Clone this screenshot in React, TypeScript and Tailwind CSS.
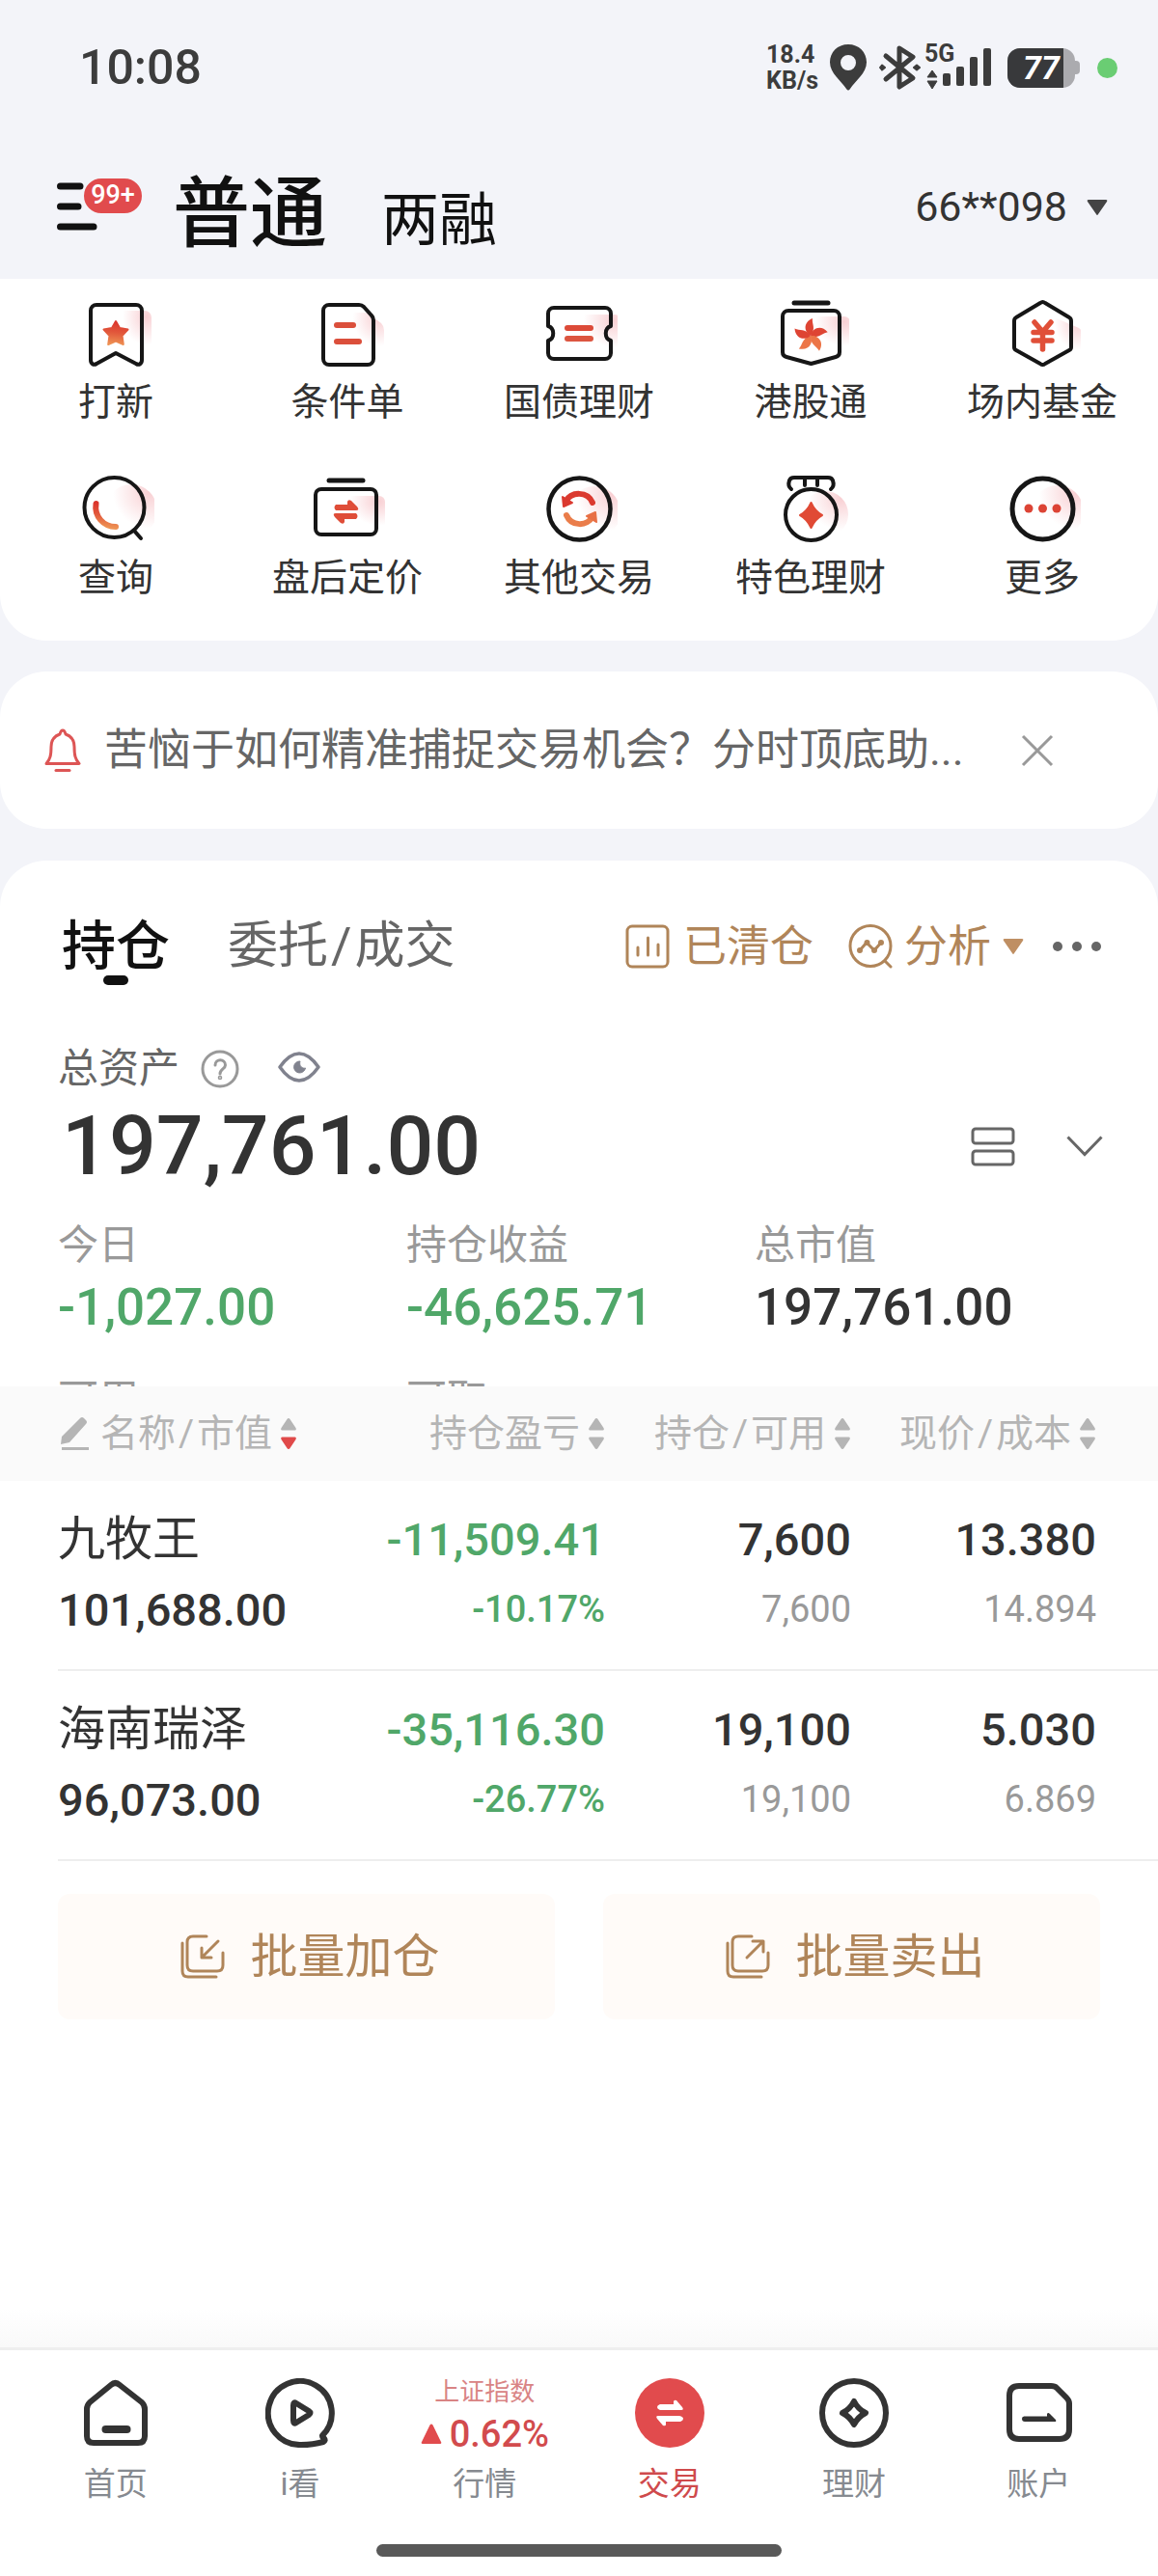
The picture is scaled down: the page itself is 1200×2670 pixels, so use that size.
import { Fragment, type ReactNode } from "react";

const INK = "#161616";

function Glow({ children }: { children: ReactNode }) {
  return (
    <svg viewBox="0 0 80 80" className="size-20" fill="none" strokeLinecap="round" strokeLinejoin="round">
      {children}
    </svg>
  );
}

// gradients shared by the shortcut icons
function Gradients() {
  return (
    <svg className="absolute size-0" aria-hidden="true">
      <defs>
        <linearGradient id="fire" x1="0.5" y1="0" x2="0.4" y2="1">
          <stop offset="0" stopColor="#db332b" />
          <stop offset="0.5" stopColor="#e2593c" />
          <stop offset="1" stopColor="#ee9253" />
        </linearGradient>
        <radialGradient id="blush" cx="0.85" cy="0.15" r="0.7">
          <stop offset="0" stopColor="#ef8e96" stopOpacity="0.42" />
          <stop offset="1" stopColor="#ef8e96" stopOpacity="0" />
        </radialGradient>
      </defs>
    </svg>
  );
}

const shortcuts: { label: string; icon: ReactNode }[] = [
  {
    label: "打新",
    icon: (
      <Glow>
        <rect x="42" y="15" width="35" height="42" rx="7" fill="url(#blush)" />
        <path d="M20 9H61a6 6 0 0 1 6 6V66c0 4-3 6-6 4L40 59 20 70c-3 2-6 0-6-4V15a6 6 0 0 1 6-6z" stroke={INK} strokeWidth="4" />
        <path d="M40 26l4 7 8.500 1.500-6 6.500 1.300 9-7.800-3.500-7.800 3.500 1.300-9-6-6.500 8.500-1.500z" fill="url(#fire)" stroke="url(#fire)" strokeWidth="2" />
      </Glow>
    ),
  },
  {
    label: "条件单",
    icon: (
      <Glow>
        <path d="M40 17H60L75 28q3 3 3 7V58H40z" fill="url(#blush)" />
        <path d="M21 9H52q3 0 5 2L65 20q2 2 2 5V65a6 6 0 0 1-6 6H21a6 6 0 0 1-6-6V15a6 6 0 0 1 6-6z" stroke={INK} strokeWidth="4" />
        <rect x="26" y="27" width="23" height="6" rx="3" fill="#db4f3b" />
        <rect x="26" y="44" width="29" height="6" rx="3" fill="#db4f3b" />
      </Glow>
    ),
  },
  {
    label: "国债理财",
    icon: (
      <Glow>
        <rect x="38" y="19" width="45" height="40" rx="6" fill="url(#blush)" />
        <path d="M14 12H67a6 6 0 0 1 6 6V31c-7 2-7 13 0 15V59a6 6 0 0 1-6 6H14a6 6 0 0 1-6-6V46c7-2 7-13 0-15V18a6 6 0 0 1 6-6z" stroke={INK} strokeWidth="4" />
        <rect x="25" y="30" width="30" height="6" rx="3" fill="#dc4a38" />
        <rect x="25" y="41" width="30" height="6" rx="3" fill="#dc5540" />
      </Glow>
    ),
  },
  {
    label: "港股通",
    icon: (
      <Glow>
        <rect x="38" y="21" width="43" height="36" rx="6" fill="url(#blush)" />
        <path d="M23 7H58" stroke={INK} strokeWidth="5" />
        <path d="M17 15H64a6 6 0 0 1 6 6V58q0 4-4 5L40.500 70 15 63q-4-1-4-5V21a6 6 0 0 1 6-6z" stroke={INK} strokeWidth="4" />
        {[0, 72, 144, 216, 288].map((a) => (
          <path key={a} d="M40 41C33 37 32 27 42 23C41 29 46 33 40 41z" transform={`rotate(${a} 40 41)`} fill={a > 100 && a < 250 ? "#ec7547" : "#de4433"} />
        ))}
      </Glow>
    ),
  },
  {
    label: "场内基金",
    icon: (
      <Glow>
        <path d="M48 20L78 33q3 2 3 5V62L48 60z" fill="url(#blush)" />
        <path d="M38 7q2.500-2 5 0L68 22q2 1 2 4V53q0 2-2 3L43 70q-2.500 2-5 0L13 56q-2-1-2-3V26q0-3 2-4z" stroke={INK} strokeWidth="4" />
        <path d="M32 27l8.500 10L49 27M31 37.500H50M31 46H50M40.500 37V55" stroke="#e04f38" strokeWidth="5.500" />
      </Glow>
    ),
  },
  {
    label: "查询",
    icon: (
      <Glow>
        <circle cx="56" cy="40" r="27" fill="url(#blush)" />
        <circle cx="38.500" cy="37" r="31" stroke={INK} strokeWidth="4" />
        <path d="M59 61l7 8" stroke={INK} strokeWidth="4" />
        <path d="M19.500 33C17.500 46 27 57 40 57" stroke="url(#fire)" strokeWidth="6" />
      </Glow>
    ),
  },
  {
    label: "盘后定价",
    icon: (
      <Glow>
        <rect x="36" y="25" width="43" height="36" rx="6" fill="url(#blush)" />
        <path d="M21 9H56" stroke={INK} strokeWidth="5" />
        <rect x="7" y="18" width="63" height="47" rx="6" stroke={INK} strokeWidth="4" />
        <path d="M28 34H40V31q1-3 4-1l6 6q3 4-1 4H28q-3-3 0-6zM49 43H28q-4 0-1 4l6 6q3 2 4-1V49H49q3-3 0-6z" fill="#df4d38" />
      </Glow>
    ),
  },
  {
    label: "其他交易",
    icon: (
      <Glow>
        <circle cx="56" cy="42" r="27" fill="url(#blush)" />
        <circle cx="40.500" cy="38.500" r="32" stroke={INK} strokeWidth="4.500" />
        <path d="M26 31C32 20 49 20 54 32" stroke="#db3a30" strokeWidth="6" />
        <path d="M23 26l1 10 9-4z" fill="#db3a30" stroke="#db3a30" strokeWidth="2" />
        <path d="M27 45C32 57 49 57 54 46" stroke="#ea7d4a" strokeWidth="6" />
        <path d="M58 52l-1-10-9 4z" fill="#e86f45" stroke="#e86f45" strokeWidth="2" />
      </Glow>
    ),
  },
  {
    label: "特色理财",
    icon: (
      <Glow>
        <circle cx="55" cy="44" r="24" fill="url(#blush)" />
        <path d="M20 18q-4-3-2-9 1-3 5-3H58q4 0 5 3 2 6-2 9M34 7v7M47 7v7" stroke={INK} strokeWidth="4" />
        <circle cx="40.500" cy="44.500" r="26.500" stroke={INK} strokeWidth="4" />
        <path d="M40.500 32q4 9 11.500 13-7.500 4-11.500 13-4-9-11.500-13 7.500-4 11.500-13z" fill="#e04a35" stroke="#e04a35" strokeWidth="2" />
      </Glow>
    ),
  },
  {
    label: "更多",
    icon: (
      <Glow>
        <circle cx="56" cy="41" r="27" fill="url(#blush)" />
        <circle cx="40.500" cy="38.500" r="31.500" stroke={INK} strokeWidth="5" />
        <circle cx="26" cy="38" r="4.500" fill="#dc4435" />
        <circle cx="40.500" cy="38" r="4.500" fill="#dc4435" />
        <circle cx="55" cy="38" r="4.500" fill="#dc4435" />
      </Glow>
    ),
  },
];

const summary = [
  { label: "今日", value: "-1,027.00", color: "text-[#50a769]" },
  { label: "持仓收益", value: "-46,625.71", color: "text-[#50a769]" },
  { label: "总市值", value: "197,761.00", color: "text-[#333333]" },
];

const positions = [
  { name: "九牧王", value: "101,688.00", pnl: "-11,509.41", pct: "-10.17%", held: "7,600", usable: "7,600", price: "13.380", cost: "14.894" },
  { name: "海南瑞泽", value: "96,073.00", pnl: "-35,116.30", pct: "-26.77%", held: "19,100", usable: "19,100", price: "5.030", cost: "6.869" },
];

// "A/B" labels get a little air around the slash
function Pair({ text }: { text: string }) {
  return (
    <span>
      {text.split("/").map((part, i) => (
        <Fragment key={part}>
          {i > 0 && <span className="mx-[3px]">/</span>}
          {part}
        </Fragment>
      ))}
    </span>
  );
}

function SortArrows({ down = "#b5b5b5" }: { down?: string }) {
  return (
    <svg viewBox="0 0 18 34" className="h-[34px] w-[18px] shrink-0">
      <path d="M9 1q1 0 1.500 1l6 9q1 2.500-1 2.500h-13q-2 0-1-2.500l6-9Q8 1 9 1z" fill="#b5b5b5" />
      <path d="M9 33q1 0 1.500-1l6-9q1-2.500-1-2.500h-13q-2 0-1 2.500l6 9Q8 33 9 33z" fill={down} />
    </svg>
  );
}

function StatusBar() {
  return (
    <div className="flex h-[140px] items-center justify-between pr-[42px] pl-[82px] text-[#3c3c3c]">
      <span className="text-[50px] leading-none font-medium">10:08</span>
      <div className="flex items-center">
        <div className="mr-3 text-[25px] leading-[27px] font-bold">
          <div>18.4</div>
          <div>KB/s</div>
        </div>
        <svg viewBox="0 0 38 48" className="mr-3 h-12 w-[38px]" fill="currentColor">
          <path fillRule="evenodd" d="M19 0C8 0 0 8 0 18.500 0 30 12 38 17 46q2 3 4 0C26 38 38 30 38 18.500 38 8 30 0 19 0zM19 11a8 8 0 1 1 0 16 8 8 0 0 1 0-16z" />
        </svg>
        <svg viewBox="0 0 44 48" className="mr-1 h-12 w-11" fill="none" stroke="currentColor" strokeWidth="5" strokeLinejoin="round" strokeLinecap="round">
          <path d="M8 12L36 35 22 44V4L36 13 8 36" />
          <path d="M4 21.500l3 2.500-3 2.500L2 24zM40 21.500l3 2.500-3 2.500L37 24z" strokeWidth="2" fill="currentColor" />
        </svg>
        <div className="relative mr-4 h-12 w-[70px]">
          <svg viewBox="0 0 70 48" className="h-12 w-[70px]" fill="currentColor">
            <path d="M8 27l5 7H3zM8 46l5-8H3z" stroke="currentColor" strokeWidth="1" strokeLinejoin="round" />
            <rect x="19" y="30" width="8" height="13" rx="2" />
            <rect x="33" y="23" width="8" height="20" rx="2" />
            <rect x="47" y="13" width="8" height="30" rx="2" />
            <rect x="61" y="4" width="8" height="39" rx="2" />
          </svg>
          <span className="absolute -top-1 left-0 text-[25px] leading-[27px] font-bold">5G</span>
        </div>
        <div className="flex items-center">
          <div className="flex h-[41px] w-[70px] overflow-hidden rounded-[13px] bg-[#ababaf]">
            <div className="flex w-[58px] items-center justify-center bg-[#38393b] pl-3 text-[34px] leading-none font-bold text-white italic">77</div>
          </div>
          <div className="h-[14px] w-[5px] rounded-r-sm bg-[#ababaf]" />
        </div>
        <div className="ml-[18px] size-[21px] rounded-full bg-[#6acd73]" />
      </div>
    </div>
  );
}

function Header() {
  return (
    <header className="flex h-[149px] items-center justify-between pr-[52px] pl-[59px]">
      <div className="flex items-center">
        <button type="button" aria-label="菜单" className="relative h-[52px] w-[120px]">
          <svg viewBox="0 0 42 52" className="h-[52px] w-[42px]" stroke="#111111" strokeWidth="7" strokeLinecap="round">
            <path d="M3.500 4H24M3.500 25H22M3.500 46H38" />
          </svg>
          <span className="absolute -top-[6px] left-[26px] flex h-10 w-16 items-center justify-center rounded-full border-2 border-[#f3f4f9] bg-[#e14b4d] text-[27px] leading-none font-medium text-white">99+</span>
        </button>
        <div className="mt-[22px] flex items-baseline gap-[56px] text-[#111111]">
          <h1 className="text-[80px] leading-[100px] font-medium">普通</h1>
          <a href="#margin" className="text-[60px] leading-[100px]">两融</a>
        </div>
      </div>
      <button type="button" className="flex items-center gap-5 text-[43px] leading-none text-[#333333]">
        66**098
        <svg viewBox="0 0 22 18" className="h-[18px] w-[22px]" fill="#444444">
          <path d="M2 1H20q2 0 1 2L12 16q-1 2-2 0L1 3Q0 1 2 1z" />
        </svg>
      </button>
    </header>
  );
}

function Summary() {
  return (
    <div className="h-[367px] overflow-hidden pr-[57px] pl-[60px]">
      <div className="flex h-[76px] items-center text-[42px] leading-none text-[#666666]">
        总资产
        <button type="button" aria-label="说明" className="ml-[22px]">
          <svg viewBox="0 0 40 40" className="size-10" fill="none" stroke="#999999" strokeWidth="3" strokeLinecap="round">
            <circle cx="20" cy="20" r="18" />
            <path d="M15 16c0-7 10.500-7 10.500 0 0 4-5.500 4-5.500 9" />
            <circle cx="20" cy="29" r="0.800" />
          </svg>
        </button>
        <button type="button" aria-label="隐藏金额" className="ml-10">
          <svg viewBox="0 0 44 34" className="mb-1 h-[34px] w-11" fill="none" stroke="#80828e" strokeWidth="3.500" strokeLinejoin="round">
            <path d="M2 17C9 7 15 3 22 3s13 4 20 14C35 27 29 31 22 31S9 27 2 17z" />
            <path d="M23 11a6 6 0 1 0 5.500 7c-3 1-7-2-5.500-7z" fill="#80828e" stroke="#80828e" strokeWidth="1" />
          </svg>
        </button>
      </div>
      <div className="flex h-[84px] items-center justify-between">
        <span className="pl-1 text-[86px] leading-none font-medium text-[#333333]">197,761.00</span>
        <div className="flex items-center gap-[53px]">
          <button type="button" aria-label="列表样式">
            <svg viewBox="0 0 46 42" className="h-[42px] w-[46px]" fill="none" stroke="#666666" strokeWidth="3">
              <rect x="2" y="3" width="42" height="15" rx="3" />
              <rect x="2" y="26" width="42" height="14" rx="3" />
            </svg>
          </button>
          <button type="button" aria-label="展开">
            <svg viewBox="0 0 38 22" className="h-[22px] w-[38px]" fill="none" stroke="#666666" strokeWidth="3">
              <path d="M1.500 1.500L19 19.500 36.500 1.500" />
            </svg>
          </button>
        </div>
      </div>
      <dl className="grid grid-cols-3 gap-y-8 pt-7">
        {summary.map((s) => (
          <div key={s.label}>
            <dt className="text-[42px] leading-[66px] text-[#999999]">{s.label}</dt>
            <dd className={`text-[53px] leading-[62px] font-medium ${s.color}`}>{s.value}</dd>
          </div>
        ))}
        <dt className="text-[42px] leading-[66px] text-[#999999]">可用</dt>
        <dt className="text-[42px] leading-[66px] text-[#999999]">可取</dt>
      </dl>
    </div>
  );
}

const cell = "flex h-[197px] flex-col border-b-2 border-[#eeeeee] pt-6 leading-[73px]";

function Holdings() {
  return (
    <table className="w-full table-fixed border-collapse">
      <colgroup>
        <col className="w-[31%]" />
        <col className="w-[21.25%]" />
        <col className="w-[21.25%]" />
        <col className="w-[26.5%]" />
      </colgroup>
      <thead className="bg-[#fafafa] text-[39px] leading-none text-[#b5b5b5]">
        <tr className="h-[98px]">
          <th className="pl-[60px] font-normal">
            <button type="button" className="flex items-center gap-2 whitespace-nowrap">
              <svg viewBox="0 0 36 38" className="h-[38px] w-9" fill="#b5b5b5">
                <path d="M23 3q2-2 4 0l2 2q2 2 0 4L12 28 3 30l1-8zM4 33H32v3H4z" />
              </svg>
              <Pair text="名称/市值" />
              <SortArrows down="#e04a4a" />
            </button>
          </th>
          <th className="font-normal">
            <button type="button" className="ml-auto flex items-center gap-2 whitespace-nowrap">持仓盈亏<SortArrows /></button>
          </th>
          <th className="font-normal">
            <button type="button" className="ml-auto flex items-center gap-2 whitespace-nowrap"><Pair text="持仓/可用" /><SortArrows /></button>
          </th>
          <th className="pr-[64px] font-normal">
            <button type="button" className="ml-auto flex items-center gap-2 whitespace-nowrap"><Pair text="现价/成本" /><SortArrows /></button>
          </th>
        </tr>
      </thead>
      <tbody className="text-right text-[47px] text-[#333333]">
        {positions.map((p) => (
          <tr key={p.name}>
            <td className="pl-[60px] text-left">
              <div className={cell}>
                <span className="text-[49px]">{p.name}</span>
                <span className="font-medium">{p.value}</span>
              </div>
            </td>
            <td className="font-medium text-[#50a769]">
              <div className={cell}>
                <span>{p.pnl}</span>
                <span className="text-[38px]">{p.pct}</span>
              </div>
            </td>
            <td>
              <div className={cell}>
                <span className="font-medium">{p.held}</span>
                <span className="text-[38px] text-[#999999]">{p.usable}</span>
              </div>
            </td>
            <td>
              <div className={`${cell} pr-[64px]`}>
                <span className="font-medium">{p.price}</span>
                <span className="text-[38px] text-[#999999]">{p.cost}</span>
              </div>
            </td>
          </tr>
        ))}
      </tbody>
    </table>
  );
}

function BatchButton({ label, arrow }: { label: string; arrow: string }) {
  return (
    <button type="button" className="flex h-[130px] flex-1 items-center justify-center gap-[26px] rounded-xl bg-[#fffbf8] pl-2 text-[49px] leading-none text-[#b08559]">
      <svg viewBox="0 0 46 46" className="size-[46px]" fill="none" stroke="#b08559" strokeWidth="3" strokeLinecap="round" strokeLinejoin="round">
        <path d="M27 2H13q-6 0-6 6V32q0 6 6 6H38q6 0 6-6V19M2 9V38q0 6 6 6H37" />
        <path d={arrow} />
      </svg>
      {label}
    </button>
  );
}

function NavItem({ label, children, active = false }: { label: string; children: ReactNode; active?: boolean }) {
  return (
    <a href={`#${label}`} className="flex flex-1 flex-col items-center gap-4">
      {children}
      <span className={`text-[33px] leading-[44px] ${active ? "text-[#cf4a4c]" : "text-[#868a90]"}`}>{label}</span>
    </a>
  );
}

function NavIcon({ children }: { children: ReactNode }) {
  return (
    <svg viewBox="0 0 72 72" className="size-[72px]" fill="none" stroke="#333333" strokeWidth="6" strokeLinecap="round" strokeLinejoin="round">
      {children}
    </svg>
  );
}

function BottomNav() {
  return (
    <nav className="border-t-[3px] border-[#eeeeee] bg-white">
      <div className="flex pt-[29px] pr-[28px] pl-6">
        <NavItem label="首页">
          <NavIcon>
            <path d="M31 7q4.500-4 9 0L63 25q3 3 3 7V60q0 7-7 7H13q-7 0-7-7V32q0-4 3-7z" />
            <path d="M25.500 53H47.500" strokeWidth="8" />
          </NavIcon>
        </NavItem>
        <NavItem label="i看">
          <NavIcon>
            <path d="M59 59.500A33 33 0 1 0 37 69c8 0 16-1 23-3 2-1 2-2 1-3.500q-2-1-2-3z" />
            <path d="M29 28q0-4 3-2L45 34q3 2 0 4L32 46q-3 2-3-2z" />
          </NavIcon>
        </NavItem>
        <NavItem label="行情">
          <div className="flex h-[72px] flex-col items-center">
            <span className="text-[26px] leading-[28px] text-[#d98484]">上证指数</span>
            <span className="flex items-center gap-2 text-[38px] leading-[60px] font-medium text-[#d24b4d]">
              <svg viewBox="0 0 22 22" className="size-[22px]" fill="#e14b4d">
                <path d="M9.500 1.500q1.500-2 3 0L21 19q1 2-1 2H2q-2 0-1-2z" />
              </svg>
              0.62%
            </span>
          </div>
        </NavItem>
        <NavItem label="交易" active>
          <NavIcon>
            <circle cx="36" cy="36" r="36" fill="#e14b4d" stroke="none" />
            <path d="M26 27H40V24q1-2 3-1l6 7q2 3-1 3H26q-3-1-3-3t3-3zM46 39H24q-3 0-1 3l6 7q3 1 3-1V45H47q3-1 3-3t-4-3z" fill="#fff" stroke="none" />
          </NavIcon>
        </NavItem>
        <NavItem label="理财">
          <NavIcon>
            <circle cx="36" cy="36" r="33" />
            <path d="M36 24q4 8 12 12-8 4-12 12-4-8-12-12 8-4 12-12z" />
          </NavIcon>
        </NavItem>
        <NavItem label="账户">
          <NavIcon>
            <path d="M16 8H49q4 0 6 2L65 20q3 3 3 6V53q0 10-10 10H16Q6 63 6 53V18Q6 8 16 8z" />
            <path d="M22 39.500H45V37q1-2 3 0l6 6q1 2-1 2H22q-3 0-3-3t3-2.500z" fill="#333333" stroke="none" />
          </NavIcon>
        </NavItem>
      </div>
      <div className="mx-auto mt-10 mb-5 h-[13px] w-[35%] rounded-full bg-[#595959]" />
    </nav>
  );
}

export default function App() {
  return (
    <div className="flex min-h-screen flex-col bg-[#f3f4f9] font-['Roboto','Noto_Sans_CJK_SC',sans-serif]" lang="zh-CN">
      <Gradients />
      <StatusBar />
      <Header />

      {/* 快捷入口 */}
      <section className="grid grid-cols-5 gap-y-[42px] rounded-b-[48px] bg-white pt-[18px] pb-[35px]">
        {shortcuts.map((s) => (
          <a key={s.label} href={`#${s.label}`} className="flex flex-col items-center text-[#333333]">
            {s.icon}
            <span className="text-[39px] leading-[60px]">{s.label}</span>
          </a>
        ))}
      </section>

      {/* 公告 */}
      <section className="mt-8 flex h-[163px] items-center rounded-[48px] bg-white pr-[108px] pl-[44px]">
        <svg viewBox="0 0 42 46" className="h-[46px] w-[42px]" fill="none" stroke="#dd5555" strokeWidth="3" strokeLinejoin="round" strokeLinecap="round">
          <path d="M21 2q2 0 3 4c6 2 9 7 9 13 0 9 1 13 5 17.500H4c4-4.500 5-8.500 5-17.500C9 13 12 8 18 6q1-4 3-4z" />
          <path d="M14 43.500H28" />
        </svg>
        <p className="ml-[22px] flex-1 text-[45px] leading-none text-[#666666]">苦恼于如何精准捕捉交易机会？分时顶底助...</p>
        <button type="button" aria-label="关闭">
          <svg viewBox="0 0 34 34" className="size-[34px]" stroke="#999999" strokeWidth="3">
            <path d="M2 2L32 32M32 2L2 32" />
          </svg>
        </button>
      </section>

      <main className="mt-[33px] flex-1 rounded-t-[48px] bg-white">
        <div className="flex h-[178px] items-center justify-between pr-[59px] pl-[64px]">
          <div className="flex items-center gap-[60px]">
            <a href="#holdings" className="relative text-[56px] leading-none font-medium text-[#111111]">
              持仓
              <span className="absolute -bottom-[12px] left-1/2 h-[10px] w-[26px] -translate-x-1/2 rounded-full bg-[#111111]" />
            </a>
            <a href="#orders" className="text-[52px] leading-none text-[#666666]"><Pair text="委托/成交" /></a>
          </div>
          <div className="flex items-center text-[45px] leading-none text-[#b08559]">
            <button type="button" className="flex items-center gap-[14px]">
              <svg viewBox="0 0 46 46" className="size-[46px]" fill="none" stroke="currentColor" strokeWidth="3" strokeLinecap="round">
                <rect x="2" y="2" width="42" height="42" rx="5" />
                <path d="M13 24v8M23.500 14v18M34 21v11" />
              </svg>
              已清仓
            </button>
            <button type="button" className="ml-9 flex items-center gap-3">
              <svg viewBox="0 0 46 46" className="size-[46px]" fill="none" stroke="currentColor" strokeWidth="3" strokeLinecap="round">
                <circle cx="23" cy="22.500" r="21" />
                <path d="M38 38l6 6M12 27l7-8 8 8 7-8" />
                <g fill="currentColor" strokeWidth="2">
                  <circle cx="12" cy="27" r="2" />
                  <circle cx="19.500" cy="19" r="2" />
                  <circle cx="27" cy="27" r="2" />
                  <circle cx="34" cy="19" r="2" />
                </g>
              </svg>
              分析
              <svg viewBox="0 0 22 18" className="h-[18px] w-[22px]" fill="#bf8f63">
                <path d="M2 1H20q2 0 1 2L12 16q-1 2-2 0L1 3Q0 1 2 1z" />
              </svg>
            </button>
            <button type="button" aria-label="更多" className="ml-[30px] flex gap-[10px]">
              <span className="size-[10px] rounded-full bg-[#666666]" />
              <span className="size-[10px] rounded-full bg-[#666666]" />
              <span className="size-[10px] rounded-full bg-[#666666]" />
            </button>
          </div>
        </div>
        <Summary />
        <Holdings />
        <div className="flex gap-[50px] px-[60px] pt-[34px] pb-10">
          <BatchButton label="批量加仓" arrow="M39 7L22 24M22 14V24H32" />
          <BatchButton label="批量卖出" arrow="M22 24L38 8M28 7H39V18" />
        </div>
      </main>

      <div className="h-10 bg-linear-to-b from-white to-[#f9f9f9]" />
      <BottomNav />
    </div>
  );
}
